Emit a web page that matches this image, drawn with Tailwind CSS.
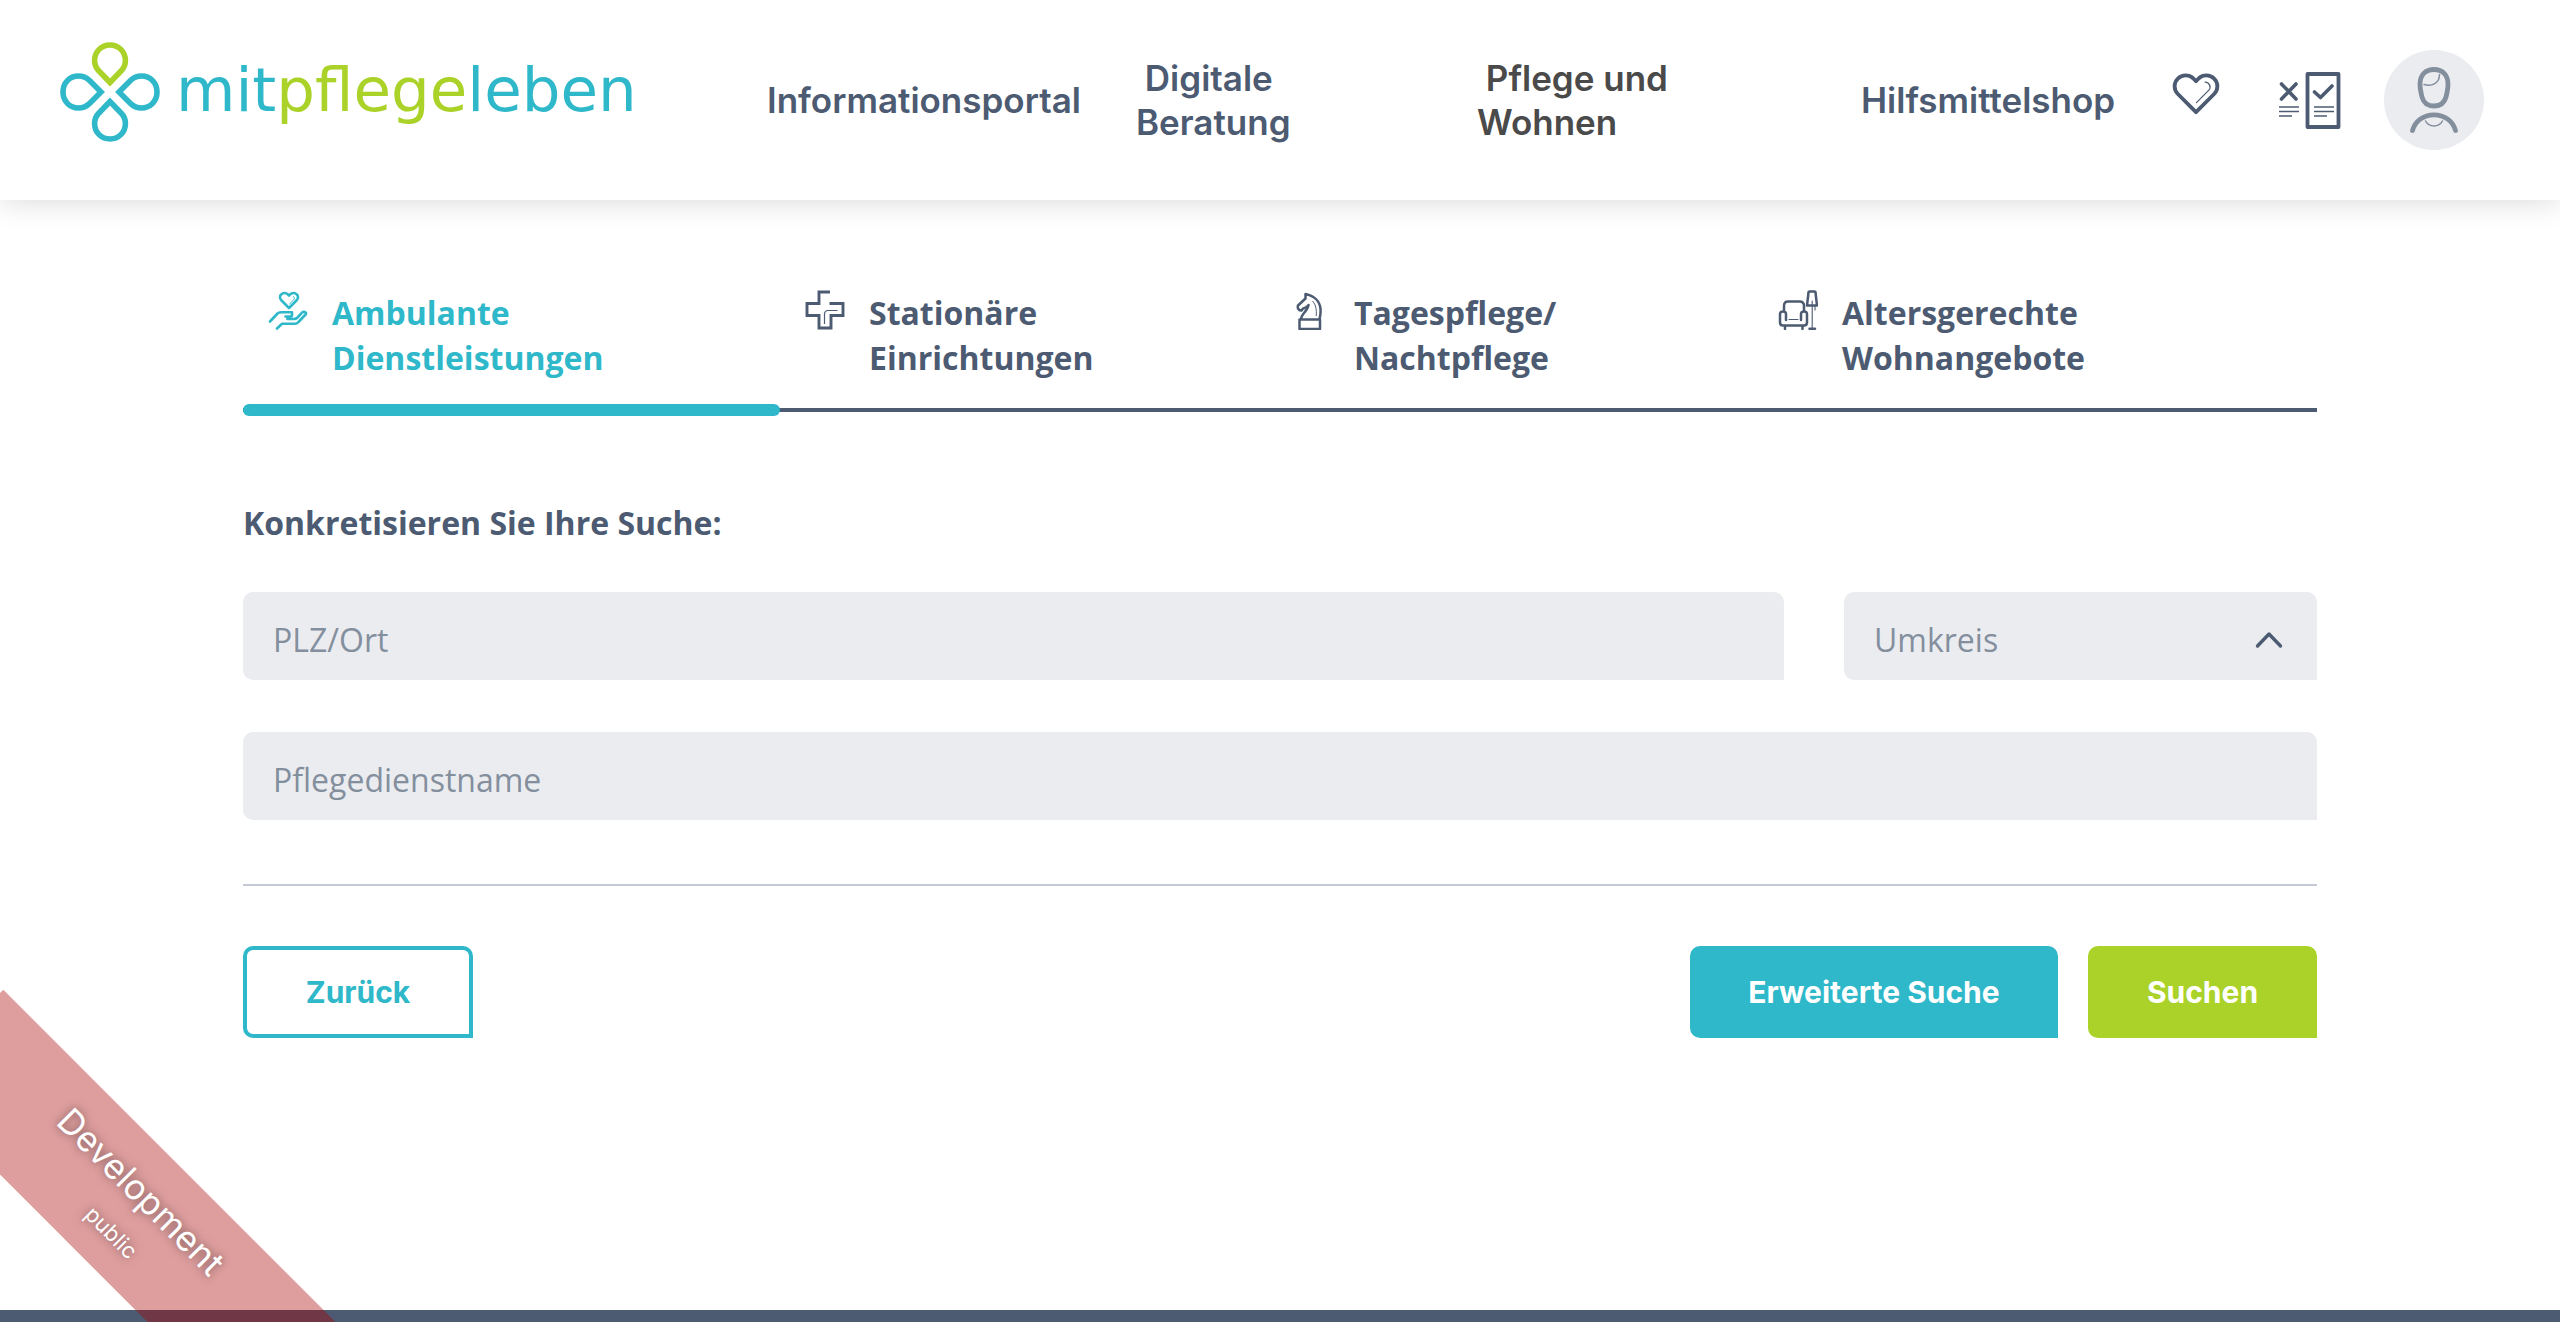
<!DOCTYPE html>
<html lang="de">
<head>
<meta charset="utf-8">
<meta name="viewport" content="width=device-width, initial-scale=1">
<title>mitpflegeleben – Ambulante Dienstleistungen</title>
<script src="https://cdn.jsdelivr.net/npm/@tailwindcss/browser@4"></script>
</head>
<body class="relative flex min-h-screen flex-col overflow-x-hidden bg-white font-['Open_Sans',sans-serif] text-[32px] leading-[45px] text-[#4c5b72]">

<header class="flex h-[200px] items-center bg-white pr-[76px] pl-[60px] font-['Inter',sans-serif] text-[35px] leading-[44px] font-semibold shadow-[0_0_30px_rgba(0,0,0,0.16)]">
  <a href="#" class="flex items-center gap-[16px] pb-4" aria-label="mitpflegeleben">
    <svg class="h-[100px] w-[100px] shrink-0" viewBox="0 0 100 100" fill="none" stroke="#2eb8c9" stroke-width="5.6">
      <path stroke="#aad228" d="M50 40.500 L38.500 28.500 C34.500 24.300 34.600 20 34.600 18.500 C34.600 9.500 41.500 3 50 3 C58.500 3 65.400 9.500 65.400 18.500 C65.400 20 65.500 24.300 61.500 28.500 Z"/>
      <path d="M50 59.500 L38.500 71.500 C34.500 75.700 34.600 80 34.600 81.500 C34.600 90.500 41.500 97 50 97 C58.500 97 65.400 90.500 65.400 81.500 C65.400 80 65.500 75.700 61.500 71.500 Z"/>
      <path d="M41 50 L29.500 38.500 C25.500 34.500 21.500 34 18.500 34 C9.500 34 3 41 3 50 C3 59 9.500 66 18.500 66 C21.500 66 25.500 65.500 29.500 61.500 Z"/>
      <path d="M59 50 L70.500 38.500 C74.500 34.500 78.500 34 81.500 34 C90.500 34 97 41 97 50 C97 59 90.500 66 81.500 66 C78.500 66 74.500 65.500 70.500 61.500 Z"/>
    </svg>
    <span class="pb-1 font-['DejaVu_Sans',sans-serif] text-[61px] leading-[72px] font-normal whitespace-nowrap text-[#2eb8c9]">mit<span class="text-[#aad228]">pflege</span>leben</span>
  </a>
  <nav class="ml-auto flex items-center gap-[60px]">
    <a href="#" class="w-[309px]">Informationsportal</a>
    <a href="#" class="w-[281px]">&nbsp;Digitale<br>Beratung</a>
    <a href="#" class="w-[324px] text-[#4a4a4a]">&nbsp;Pflege und<br>Wohnen</a>
    <a href="#" class="w-[251px]">Hilfsmittelshop</a>
  </nav>
  <div class="ml-[60px] flex items-center">
    <a href="#" aria-label="Merkliste" class="pb-3">
      <svg class="h-[42px] w-[48px]" viewBox="0 0 50 44" fill="none" stroke="#4c5b72" stroke-linecap="round" stroke-linejoin="round">
        <path stroke-width="4" d="M25 41 L6 22 C1.500 17.500 1.500 10 6 5.800 C10.500 1.500 17.500 1.500 22 5.500 L25 8.500 L28 5.500 C32.500 1.500 39.500 1.500 44 5.800 C48.500 10 48.500 17.500 44 22 Z"/>
        <path stroke-width="1.300" d="M34.500 9.500 C38.500 9.500 41.500 14.500 38.500 18 L25.500 31"/>
      </svg>
    </a>
    <a href="#" aria-label="Vergleich" class="ml-[58px]">
      <svg class="h-[60px] w-[64px]" viewBox="0 0 64 60" fill="none" stroke="#4c5b72" stroke-linecap="round" stroke-linejoin="round">
        <rect x="29.500" y="4" width="31" height="53" stroke-width="3.800"/>
        <path stroke-width="3.600" d="M3.500 14 L18 29 M18 14 L3.500 29 M36.500 22 L42.500 27.500 L54 16"/>
        <path stroke-width="1.500" stroke-linecap="butt" d="M1 37H21 M1 41.500H21 M1 46H14 M36 37H56 M36 41.500H56 M36 46H49"/>
      </svg>
    </a>
    <a href="#" aria-label="Profil" class="ml-[42px]">
      <svg class="h-[100px] w-[100px] rounded-full bg-[#ebecf0]" viewBox="0 0 100 100" fill="none" stroke="#848f9e" stroke-linecap="round">
        <path stroke-width="4.800" d="M50 19.500 C41.500 19.500 36 25 36 34 C36 37 37 43 38 47 C39.500 52.500 43.500 56 50 56 C56.500 56 60.500 52.500 62 47 C63 43 64 37 64 34 C64 25 58.500 19.500 50 19.500 Z M28.500 80.500 C31 71 39.500 64.800 50 64.800 C60.500 64.800 69 71 71.500 80.500"/>
        <path stroke-width="1.500" d="M40 34.500 C48 37 55.500 33 55.500 24.500 M41.500 71 C45 77.500 55 77.500 58.500 71"/>
      </svg>
    </a>
  </div>
</header>

<main class="mx-auto w-full max-w-[2074px] flex-1 pt-[90px]">
  <nav class="grid grid-cols-[537fr_485fr_488fr_564fr] bg-[linear-gradient(#4c5b72,#4c5b72)] bg-[length:100%_4px] bg-[position:0_118px] bg-no-repeat font-bold">
    <a href="#" aria-current="page" class="flex flex-col text-[#2eb8c9]">
      <span class="flex h-[114px] gap-[24px] pl-[25px]">
        <svg class="h-[40px] w-[40px] shrink-0" viewBox="0 0 40 40" fill="none" stroke="currentColor" stroke-width="2.600" stroke-linecap="round" stroke-linejoin="round">
          <path d="M21 18 L13.500 10.500 C11.500 8.500 11.500 6 13.300 4.300 C15 2.600 18 2.600 19.600 4.200 L21 5.600 L22.400 4.200 C24 2.600 27 2.600 28.700 4.300 C30.500 6 30.500 8.500 28.500 10.500 Z"/>
          <path stroke-width="1" d="M25.500 6.500 C26.800 8 26.500 9 25.500 10 L21.500 14"/>
          <path d="M2 31.500 L9.500 23.500 C10.500 22.500 11.500 22.200 13 22.200 H24 V25.500 C24 26.200 23.500 26.500 23 26.500 H17.500 M19.500 26.500 V29 H26 C27.500 29 28.500 28.500 29.500 27.500 L34 22.700 C35.500 21.200 38.500 21.800 38 24 L30.500 32 C29.500 33.200 28.500 33.800 27 33.800 H14 L9 38.500"/>
        </svg>
        <span>Ambulante<br>Dienstleistungen</span>
      </span>
      <span class="h-[12px] rounded-[6px] bg-[#2eb8c9]"></span>
    </a>
    <a href="#" class="flex gap-[24px] pl-[25px]">
      <svg class="h-[40px] w-[40px] shrink-0" viewBox="0 0 40 40" fill="none" stroke="currentColor" stroke-width="2.900">
        <path d="M25 2 H14 V13.500 H2 V25.500 H14 V38 H26 V25.500 H38 V13.500 H24.500"/>
        <path stroke-width="1.200" d="M19.500 34 V24.500 C19.500 22 20.500 20.500 23 20.500 H32.500"/>
      </svg>
      <span>Stationäre<br>Einrichtungen</span>
    </a>
    <a href="#" class="flex gap-[24px] pl-[25px]">
      <svg class="h-[40px] w-[40px] shrink-0" viewBox="0 0 40 40" fill="none" stroke="currentColor" stroke-width="2.500" stroke-linejoin="round">
        <path d="M11 29.500 C11 24 17.500 21.500 18.500 15 C15.500 18.500 14 18 13 18.500 L11.500 20.500 C9 20.500 7 18.500 8 15.500 L15.500 8.500 V4 C25 6 30 12 30.500 19 C31 23.500 30 26 29.500 29.500 Z M9.500 29.500 H30 V39 H9.500 Z"/>
        <path stroke-width="1" d="M22.500 11 C26 15 26.800 20 26.200 26"/>
      </svg>
      <span>Tagespflege/<br>Nachtpflege</span>
    </a>
    <a href="#" class="flex gap-[24px] pl-[25px]">
      <svg class="h-[40px] w-[40px] shrink-0" viewBox="0 0 40 40" fill="none" stroke="currentColor" stroke-width="2.500" stroke-linecap="round" stroke-linejoin="round">
        <path d="M6 21 V16 C6 13 7.500 11.500 10 11.500 H21.500 C24.500 11.500 26 13 26 16 V21 M8 30 V24 C8 20.500 2 20.500 2 24 V32.500 C2 34.500 3 35.500 5 35.500 H26 C28 35.500 29 34.500 29 32.500 V24 C29 20.500 23 20.500 23 24 V30 M7 36.500 V39 M24.500 36.500 V39 M29 15.500 L30.500 2.500 Q30.500 1.500 31.500 1.500 H36.500 Q37.500 1.500 37.500 2.500 L39 15.500 Z M31.500 38.800 H37"/>
        <path stroke-width="1.100" d="M11 29.500 H20 M34.200 11 V38 M37 16 V20"/>
      </svg>
      <span>Altersgerechte<br>Wohnangebote</span>
    </a>
  </nav>

  <form class="pt-[84px]" onsubmit="return false">
    <h1 class="font-bold">Konkretisieren Sie Ihre Suche:</h1>
    <div class="mt-[47px] flex gap-[60px]">
      <input type="text" aria-label="PLZ/Ort" placeholder="PLZ/Ort" class="h-[88px] min-w-0 flex-1 rounded-[10px] rounded-br-none bg-[#ebecf0] px-[30px] pt-[6px] placeholder:text-[#848f9e]">
      <div class="relative w-[473px]">
        <select aria-label="Umkreis" class="h-[88px] w-full appearance-none rounded-[10px] rounded-br-none bg-[#ebecf0] px-[30px] pt-[6px] text-[#848f9e]">
          <option>Umkreis</option>
        </select>
        <svg class="pointer-events-none absolute top-[38px] right-[34px] h-[20px] w-[28px]" viewBox="0 0 28 20" fill="none" stroke="#4c5b72" stroke-width="3.400" stroke-linecap="round" stroke-linejoin="round"><path d="M2.500 16 L14 4 L25.500 16"/></svg>
      </div>
    </div>
    <input type="text" aria-label="Pflegedienstname" placeholder="Pflegedienstname" class="mt-[52px] block h-[88px] w-full rounded-[10px] rounded-br-none bg-[#ebecf0] px-[30px] pt-[6px] placeholder:text-[#848f9e]">
    <hr class="mt-[64px] border-t-2 border-[#c3cad6]">
    <div class="mt-[60px] flex gap-[30px] font-['Inter',sans-serif] text-[30px] font-bold">
      <button type="button" class="mr-auto h-[92px] w-[230px] rounded-[10px] rounded-br-none border-4 border-[#2eb8c9] text-[#2eb8c9]">Zurück</button>
      <button type="button" class="h-[92px] w-[368px] rounded-[10px] rounded-br-none bg-[#2eb8c9] text-white">Erweiterte Suche</button>
      <button type="submit" class="h-[92px] w-[229px] rounded-[10px] rounded-br-none bg-[#aad228] text-white">Suchen</button>
    </div>
  </form>
</main>

<footer class="h-[12px] bg-[#4c5b72]"></footer>

<!-- Environment ribbon across the lower left corner -->
<div class="pointer-events-none absolute bottom-0 left-0 h-[340px] w-[350px] overflow-hidden">
  <div class="absolute bottom-[49px] -left-[114px] flex h-[133px] w-[480px] rotate-45 flex-col items-center justify-center bg-[#aa0000]/38 font-['Inter',sans-serif] text-white text-shadow-[0_0_10px_rgb(0_0_0/0.5)]">
    <span class="text-[35px] leading-[56px]">Development</span>
    <span class="pl-4 text-[22px] leading-[44px]">public</span>
  </div>
</div>

</body>
</html>
